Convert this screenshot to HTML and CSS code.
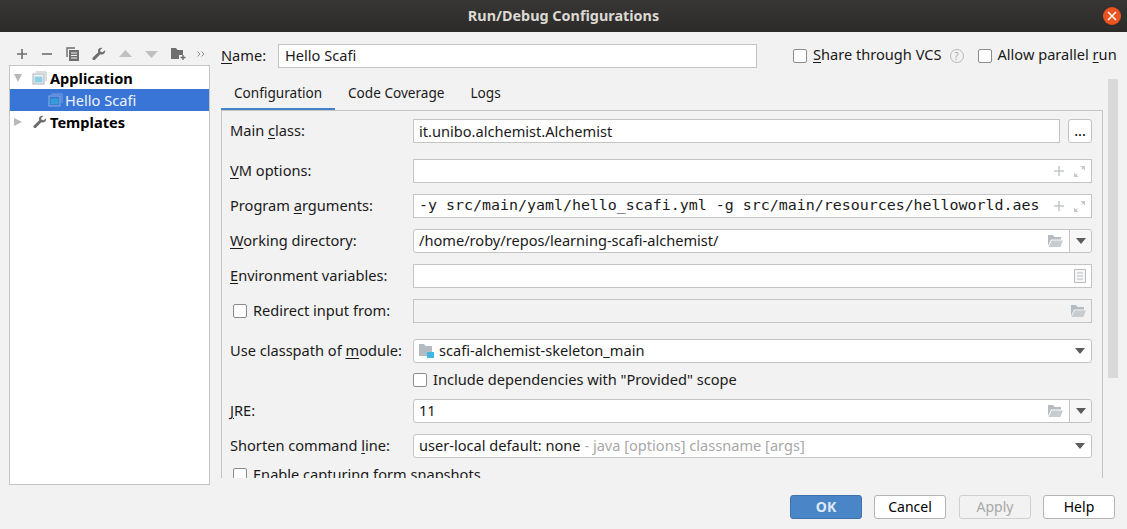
FILE: index.html
```html
<!DOCTYPE html>
<html lang="en">

<head>
    <meta charset="UTF-8">
    <title>Run/Debug Configurations</title>
    <link rel="stylesheet" href="styles.css">
</head>

<body>
    <svg class="defs" width="0" height="0">
        <symbol id="folderOpen" viewBox="0 0 16 14">
            <path d="M1 1h5l1.500 2H14v2.500H4L1 12z" fill="#b4bcc1"/>
            <path d="M4.600 6.500H16L13.400 13H1.600z" fill="#c6ccd0"/>
        </symbol>
        <symbol id="expand" viewBox="0 0 13 13">
            <path d="M7.500 1H12v4.500zM1 7.500V12h4.500z" fill="#c4c8ca"/>
            <path d="M11 2L8.500 4.500M2 11l2.500-2.500" stroke="#c4c8ca" fill="none"/>
        </symbol>
        <symbol id="wrench" viewBox="0 0 16 16">
            <path d="M15 3.600l-3 2.500-2.200-.6-.6-2.200L12 1c-2-.7-4.400.1-5 2.200-.3 1-.2 1.900.1 2.700L1 12.100c-.7.800-.6 1.800 0 2.400s1.700.700 2.400 0l6.200-6.200c.9.300 1.900.300 2.800 0 2-.7 2.900-2.700 2.600-4.700z" fill="#6e6e6e"/>
        </symbol>
        <symbol id="runWindow" viewBox="0 0 15 14">
            <path d="M3.500 1H14v9" fill="none" stroke="#b4bcc1"/>
            <rect x="1" y="3" width="11" height="10" fill="#f2f2f2" stroke="#a8b0b5"/>
            <rect x="2.500" y="5.500" width="8" height="6" fill="#8fd0e8"/>
        </symbol>
        <symbol id="runWindowSelected" viewBox="0 0 15 14">
            <path d="M3.500 1H14v9" fill="none" stroke="#7ea3df"/>
            <rect x="1" y="3" width="11" height="10" fill="#3875d7" stroke="#8eafe3"/>
            <rect x="2.500" y="5.500" width="8" height="6" fill="#359ad8"/>
        </symbol>
    </svg>

    <header class="titlebar">
        <span></span>
        <h1 class="window-title">Run/Debug Configurations</h1>
        <button class="close-button" aria-label="Close">
            <svg width="10" height="10" viewBox="0 0 10 10">
                <path d="M1 1l8 8M9 1l-8 8" stroke="#fff" stroke-width="1.500"/>
            </svg>
        </button>
    </header>

    <div class="dialog">
        <aside class="sidebar">
            <div class="toolbar">
                <svg width="12" height="12" viewBox="0 0 12 12"><path d="M6 1v10M1 6h10" stroke="#6e6e6e" stroke-width="1.600"/></svg>
                <svg width="12" height="12" viewBox="0 0 12 12"><path d="M1 6h10" stroke="#6e6e6e" stroke-width="1.600"/></svg>
                <svg width="13" height="14" viewBox="0 0 13 14"><path d="M1 10V1h8" fill="none" stroke="#6e6e6e" stroke-width="1.400"/><path d="M3 3h10v11H3z" fill="#6e6e6e"/><path d="M5 6h6M5 8.500h6M5 11h6" stroke="#f2f2f2"/></svg>
                <svg width="14" height="14"><use href="#wrench"/></svg>
                <svg width="13" height="8" viewBox="0 0 13 8"><path d="M6.500 0L13 7H0z" fill="#c0c0c0"/></svg>
                <svg width="13" height="8" viewBox="0 0 13 8"><path d="M6.500 8L13 1H0z" fill="#c0c0c0"/></svg>
                <svg width="15" height="14" viewBox="0 0 15 14"><path d="M0 1h5l1.500 2H12v5H8v4H0z" fill="#6e6e6e"/><path d="M12 8v5M9.500 10.500h5" stroke="#6e6e6e" stroke-width="1.400"/></svg>
                <svg class="more" width="8" height="6" viewBox="0 0 8 6"><path d="M.5.500L3 3 .5 5.500M4.500.500L7 3 4.500 5.500" fill="none" stroke="#909090"/></svg>
            </div>
            <ul class="tree">
                <li class="tree-row">
                    <i class="arrow-down"></i>
                    <svg class="tree-icon" width="15" height="14"><use href="#runWindow"/></svg>
                    <b>Application</b>
                </li>
                <li class="tree-row child selected">
                    <svg class="tree-icon" width="15" height="14"><use href="#runWindowSelected"/></svg>
                    <span>Hello Scafi</span>
                </li>
                <li class="tree-row">
                    <i class="arrow-right"></i>
                    <svg class="tree-icon" width="14" height="14"><use href="#wrench"/></svg>
                    <b>Templates</b>
                </li>
            </ul>
        </aside>

        <main class="details">
            <div class="name-row">
                <label class="name-label"><span class="u">N</span>ame:</label>
                <div class="box name-box"><span class="box-text">Hello Scafi</span></div>
                <label class="check share"><i class="checkbox"></i><span><span class="u">S</span>hare through VCS</span></label>
                <span class="help-mark">?</span>
                <label class="check parallel"><i class="checkbox"></i><span>Allow parallel <span class="u">r</span>un</span></label>
            </div>

            <div class="tabs">
                <span class="tab active">Configuration</span>
                <span class="tab">Code Coverage</span>
                <span class="tab">Logs</span>
            </div>

            <div class="panel-wrap">
                <section class="panel">
                    <div class="row">
                        <label class="row-label">Main <span class="u">c</span>lass:</label>
                        <div class="box grow"><span>it.unibo.alchemist.Alchemist</span></div>
                        <button class="dots">...</button>
                    </div>
                    <div class="row gap-big">
                        <label class="row-label"><span class="u">V</span>M options:</label>
                        <div class="box grow end">
                            <svg width="12" height="12" viewBox="0 0 12 12"><path d="M6 1v10M1 6h10" stroke="#c4c8ca" stroke-width="1.500"/></svg>
                            <svg width="13" height="13"><use href="#expand"/></svg>
                        </div>
                    </div>
                    <div class="row">
                        <label class="row-label">Program <span class="u">a</span>rguments:</label>
                        <div class="box grow end">
                            <span class="mono box-text">-y src/main/yaml/hello_scafi.yml -g src/main/resources/helloworld.aes</span>
                            <svg width="12" height="12" viewBox="0 0 12 12"><path d="M6 1v10M1 6h10" stroke="#c4c8ca" stroke-width="1.500"/></svg>
                            <svg width="13" height="13"><use href="#expand"/></svg>
                        </div>
                    </div>
                    <div class="row">
                        <label class="row-label"><span class="u">W</span>orking directory:</label>
                        <div class="box grow combo">
                            <span class="combo-text box-text">/home/roby/repos/learning-scafi-alchemist/</span>
                            <svg class="folder" width="16" height="14"><use href="#folderOpen"/></svg>
                            <span class="combo-arrow"><i class="caret"></i></span>
                        </div>
                    </div>
                    <div class="row">
                        <label class="row-label"><span class="u">E</span>nvironment variables:</label>
                        <div class="box grow end">
                            <svg width="12" height="14" viewBox="0 0 12 14"><path d="M.5.500h11v13H.5z" fill="#f7f7f7" stroke="#b8bcbe"/><path d="M3 4h6M3 7h6M3 10h6" stroke="#b8bcbe"/></svg>
                        </div>
                    </div>
                    <div class="row">
                        <label class="check redirect"><i class="checkbox"></i><span>Redirect input from:</span></label>
                        <div class="box grow end disabled">
                            <svg class="folder-only" width="16" height="14"><use href="#folderOpen"/></svg>
                        </div>
                    </div>
                    <div class="row gap-big">
                        <label class="row-label">Use classpath of <span class="u">m</span>odule:</label>
                        <div class="box grow rounded select">
                            <svg class="module-icon" width="15" height="14" viewBox="0 0 15 14"><path d="M0 0h5l1.500 2H13v10H0z" fill="#b4bcc1"/><path d="M8 8h7v6H8z" fill="#40b6e0"/></svg>
                            <span class="combo-text box-text">scafi-alchemist-skeleton_main</span>
                            <i class="caret"></i>
                        </div>
                    </div>
                    <div class="row include">
                        <label class="check"><i class="checkbox"></i><span>Include dependencies with "Provided" scope</span></label>
                    </div>
                    <div class="row jre">
                        <label class="row-label"><span class="u">J</span>RE:</label>
                        <div class="box grow combo">
                            <span class="combo-text box-text">11</span>
                            <svg class="folder" width="16" height="14"><use href="#folderOpen"/></svg>
                            <span class="combo-arrow"><i class="caret"></i></span>
                        </div>
                    </div>
                    <div class="row">
                        <label class="row-label">Shorten command <span class="u">l</span>ine:</label>
                        <div class="box grow rounded select">
                            <span class="combo-text box-text">user-local default: none <span class="muted">- java [options] classname [args]</span></span>
                            <i class="caret"></i>
                        </div>
                    </div>
                    <div class="row snapshots">
                        <label class="check redirect"><i class="checkbox"></i><span>Enable capturing form snapshots</span></label>
                    </div>
                </section>
                <div class="scrollbar"><div class="thumb"></div></div>
            </div>
        </main>
    </div>

    <footer class="buttons">
        <button class="btn primary">OK</button>
        <button class="btn">Cancel</button>
        <button class="btn apply" disabled>Apply</button>
        <button class="btn">Help</button>
    </footer>
</body>

</html>
```

FILE: styles.css
```css
* {
    box-sizing: border-box;
}

html,
body {
    margin: 0;
    height: 529px;
    overflow: hidden;
}

body {
    background-color: #f2f2f2;
    color: #1a1a1a;
    font-family: "Noto Sans", "Open Sans", sans-serif;
    font-size: 14px;
    display: flex;
    flex-direction: column;
}

.defs {
    position: absolute;
}

.u {
    text-decoration: underline;
    text-underline-offset: 2px;
}

/* title bar */
.titlebar {
    height: 32px;
    flex: none;
    display: grid;
    grid-template-columns: 1fr auto 1fr;
    align-items: center;
    background: linear-gradient(#383634, #2c2b2a);
}

.window-title {
    margin: 0;
    padding-bottom: 2px;
    font-size: 14.400px;
    font-weight: bold;
    color: #dcd9d2;
}

.close-button {
    width: 18px;
    height: 18px;
    padding: 0;
    margin-left: auto;
    margin-right: 6px;
    border: none;
    border-radius: 50%;
    background-color: #e95420;
    display: flex;
    align-items: center;
    justify-content: center;
}

/* main area */
.dialog {
    height: 446px;
    flex: none;
    display: flex;
    padding-left: 9px;
    font-size: 14.600px;
}

.sidebar {
    width: 201px;
    flex: none;
}

.toolbar {
    height: 33px;
    padding: 10px 0 0 7px;
    display: flex;
    align-items: center;
    gap: 13px;
}

.toolbar .more {
    margin-left: -2px;
}

.tree {
    list-style: none;
    margin: 0;
    padding: 1px 0 0;
    height: 420px;
    background-color: #fff;
    border: 1px solid #c4c4c4;
}

.tree-row {
    height: 22px;
    padding-left: 3px;
    display: flex;
    align-items: center;
    color: #000;
}

.tree-row b {
    margin-left: 3px;
}

.tree-row.child {
    padding-left: 38px;
}

.tree-row.selected {
    background-color: #3875d7;
    color: #f0f4fc;
}

.tree-row.selected span {
    margin-left: 2px;
}

.tree-icon {
    margin-left: 10px;
    flex: none;
}

.child .tree-icon {
    margin-left: 0;
}

.arrow-down {
    width: 0;
    height: 0;
    border-left: 4.500px solid transparent;
    border-right: 4.500px solid transparent;
    border-top: 8px solid #b8b8b8;
    margin-left: 1px;
}

.arrow-right {
    width: 0;
    height: 0;
    border-top: 4.500px solid transparent;
    border-bottom: 4.500px solid transparent;
    border-left: 8px solid #b8b8b8;
    margin-left: 1px;
    margin-right: 1px;
}

.details {
    width: 917px;
    padding-left: 11px;
    flex: none;
}

.name-row {
    height: 24px;
    margin-top: 12px;
    display: flex;
    align-items: center;
}

.name-label {
    width: 57px;
    flex: none;
    padding-bottom: 3px;
}

.name-box {
    width: 479px;
    flex: none;
    padding-left: 6px;
}

.box {
    height: 24px;
    background-color: #fff;
    border: 1px solid #c4c4c4;
    display: flex;
    align-items: center;
    white-space: nowrap;
}

.box-text {
    padding-bottom: 2px;
}

.name-box .box-text {
    padding-bottom: 3px;
}

.grow {
    flex: 1;
    padding-left: 5px;
}

.check {
    display: flex;
    align-items: center;
    gap: 6px;
    white-space: nowrap;
}

.check span {
    padding-bottom: 2px;
}

.check .u {
    padding-bottom: 0;
}

.name-row .check span {
    padding-bottom: 4px;
}

.name-row .check .u {
    padding-bottom: 0;
}

.checkbox {
    width: 14px;
    height: 14px;
    flex: none;
    background-color: #fff;
    border: 1px solid #8c8c8c;
    border-radius: 2px;
}

.share {
    margin-left: 36px;
}

.help-mark {
    width: 14px;
    height: 14px;
    margin-left: 8px;
    flex: none;
    border: 1px solid #b8b8b8;
    border-radius: 50%;
    color: #a8a8a8;
    font-size: 10px;
    line-height: 12px;
    text-align: center;
}

.parallel {
    margin-left: 14px;
}

.tabs {
    height: 32px;
    margin-top: 11px;
    display: flex;
    font-size: 13.600px;
}

.tab {
    padding: 0 13px;
    line-height: 27px;
    height: 32px;
}

.tab.active {
    width: 114px;
    border-bottom: 3px solid #4083c9;
}

.panel-wrap {
    display: flex;
    align-items: flex-start;
    margin-top: -32px;
}

/* the scrollbar starts level with the tabs, the panel under them */
.panel {
    width: 882px;
    height: 368px;
    flex: none;
    margin-top: 31px;
    padding: 8px 10px 0 8px;
    border: solid #c4c4c4;
    border-width: 1px 1px 0 1px;
    overflow: hidden;
}

.scrollbar {
    width: 10px;
    flex: none;
    margin-left: 5px;
    height: 299px;
}

.thumb {
    height: 100%;
    background-color: #d9d9d9;
}

.row {
    height: 24px;
    margin-bottom: 11px;
    display: flex;
    align-items: center;
}

.row.gap-big {
    margin-top: 16px;
}

.row-label {
    width: 183px;
    flex: none;
    white-space: nowrap;
    padding-bottom: 2px;
}

.redirect {
    width: 183px;
    flex: none;
    padding-left: 3px;
}

.end {
    gap: 8px;
    justify-content: flex-end;
    padding-right: 5px;
}

.mono {
    font-family: "DejaVu Sans Mono", monospace;
    font-size: 14.950px;
    margin-right: auto;
}

.dots {
    width: 24px;
    height: 24px;
    margin-left: 8px;
    padding: 0 0 4px;
    font: inherit;
    background-color: #fff;
    border: 1px solid #c4c4c4;
    border-radius: 3px;
}

.combo {
    border-radius: 3px;
    padding-right: 0;
}

.combo-text {
    flex: 1;
}

.folder {
    margin-right: 6px;
}

.combo-arrow {
    width: 22px;
    height: 100%;
    flex: none;
    display: flex;
    align-items: center;
    justify-content: center;
    border-left: 1px solid #c4c4c4;
    background-color: #f7f7f7;
    border-radius: 0 3px 3px 0;
}

.caret {
    width: 0;
    height: 0;
    border-left: 5px solid transparent;
    border-right: 5px solid transparent;
    border-top: 6px solid #5c5c5c;
}

.rounded {
    border-radius: 3px;
}

.select {
    padding-right: 6px;
}

.module-icon {
    margin-right: 5px;
    flex: none;
}

.disabled {
    background-color: #f2f2f2;
}

.folder-only {
    margin-right: 0;
}

.muted {
    color: #a8a8a8;
}

.row.include {
    height: 18px;
    margin-top: -3px;
    margin-bottom: 0;
    padding-left: 183px;
}

.row.jre {
    margin-top: 10px;
}

.row.snapshots {
    height: 18px;
    margin-top: -3px;
}

/* bottom buttons */
.buttons {
    height: 51px;
    flex: none;
    display: flex;
    justify-content: flex-end;
    gap: 12px;
    padding: 17px 12px 0 0;
}

.btn {
    width: 72px;
    height: 24px;
    padding: 0 0 2px;
    font: inherit;
    color: #000;
    background-color: #fff;
    border: 1px solid #b4b4b4;
    border-radius: 3px;
}

.btn.apply {
    margin-left: 1px;
}

.btn.primary {
    background-color: #4a86c7;
    border-color: #3d74b0;
    color: #dfe9f5;
    font-weight: bold;
}

.btn:disabled {
    background-color: #f2f2f2;
    border-color: #d0d0d0;
    color: #a8a8a8;
}
```
